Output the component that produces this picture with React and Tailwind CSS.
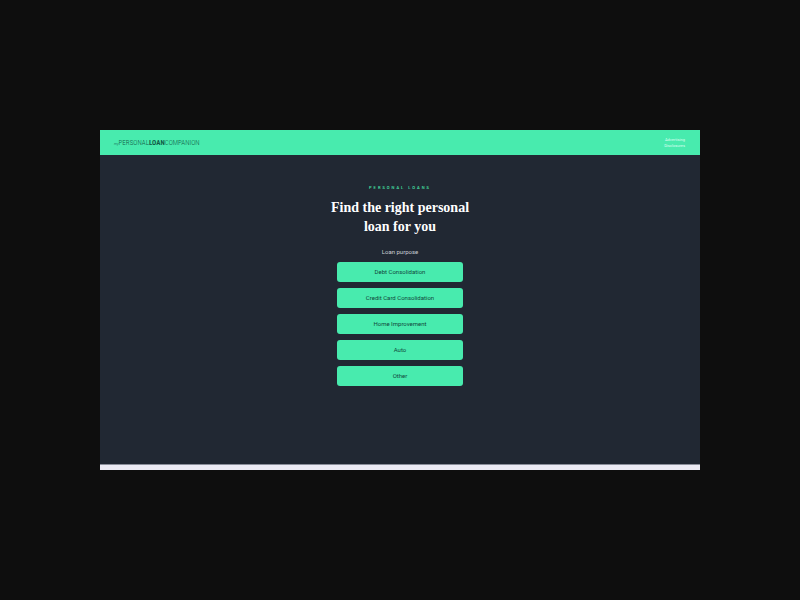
import React, { useState } from 'react';

const purposes = [
  'Debt Consolidation',
  'Credit Card Consolidation',
  'Home Improvement',
  'Auto',
  'Other',
];

const Header = () => (
  <header className="flex items-center justify-between bg-[#48ebae] h-[25px] px-[14px]">
    <a href="#home" className="flex items-baseline pt-px text-[7px] leading-[8px] font-light text-[#125a46] font-['Roboto_Condensed','Roboto',sans-serif]">
      <span className="text-[4px] italic">my</span>
      <span>PERSONAL</span>
      <span className="font-bold">LOAN</span>
      <span>COMPANION</span>
    </a>
    <a href="#disclosures" className="flex flex-col items-end pr-px text-[4px] leading-[6px] text-[#dcfff0]">
      <span>Advertising</span>
      <span>Disclosures</span>
    </a>
  </header>
);

const PurposeForm = () => {
  const [selected, setSelected] = useState('');

  return (
    <div role="group" aria-labelledby="purpose-label" className="flex flex-col items-center">
      <p id="purpose-label" className="mb-1 text-[6px] leading-[12px] text-[#c9ced4]">Loan purpose</p>
      <div className="grid gap-[6px] w-[126px]">
        {purposes.map((p) => (
          <button
            key={p}
            type="button"
            aria-pressed={selected === p}
            onClick={() => setSelected(p)}
            className="h-5 rounded-[3px] bg-[#48ebae] text-[6px] leading-[12px] text-[#12473c] cursor-pointer"
          >
            {p}
          </button>
        ))}
      </div>
    </div>
  );
};

const App = () => {
  return (
    <div className="min-h-screen flex items-center justify-center bg-[#0e0e0e] font-['Roboto',sans-serif]">
      <div className="w-3/4 bg-[#212833]">
        <Header />
        <main className="flex flex-col items-center pt-7 pb-[78px]">
          <p className="text-[4px] leading-[10px] font-medium tracking-[2px] text-[#48ebae]">PERSONAL LOANS</p>
          <h1 className="mt-[5px] mb-[10px] text-center text-[14px] leading-[19px] font-bold text-white font-['Liberation_Serif',serif]">
            Find the right personal
            <br />
            loan for you
          </h1>
          <PurposeForm />
        </main>
        <footer className="h-[6px] bg-[#ecebf5] border-t border-[#8b8f9b]" />
      </div>
    </div>
  );
};

export default App;
